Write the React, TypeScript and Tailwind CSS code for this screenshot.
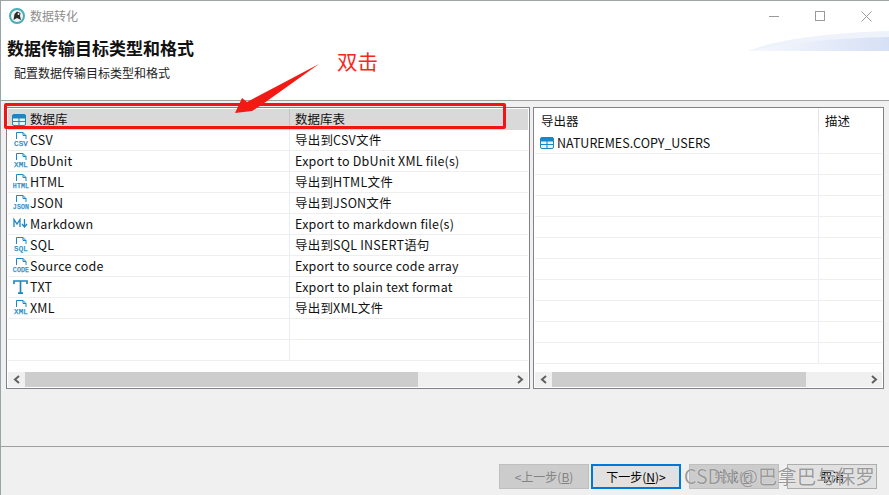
const fontStack = { fontFamily: '"Noto Sans CJK SC", "Noto Sans", sans-serif' };

type Row = { icon: string; name: string; desc: string };

const rows: Row[] = [
  { icon: 'CSV', name: 'CSV', desc: '导出到CSV文件' },
  { icon: 'XML', name: 'DbUnit', desc: 'Export to DbUnit XML file(s)' },
  { icon: 'HTML', name: 'HTML', desc: '导出到HTML文件' },
  { icon: 'JSON', name: 'JSON', desc: '导出到JSON文件' },
  { icon: 'md', name: 'Markdown', desc: 'Export to markdown file(s)' },
  { icon: 'SQL', name: 'SQL', desc: '导出到SQL INSERT语句' },
  { icon: 'CODE', name: 'Source code', desc: 'Export to source code array' },
  { icon: 'T', name: 'TXT', desc: 'Export to plain text format' },
  { icon: 'XML', name: 'XML', desc: '导出到XML文件' },
];

function TableIcon() {
  return (
    <svg width="14" height="12" viewBox="0 0 14 12" className="shrink-0">
      <rect x="0.5" y="0.5" width="13" height="11" rx="1.5" fill="#e8f3fa" stroke="#1b87c5" />
      <rect x="0.5" y="0.5" width="13" height="4" rx="1" fill="#1b87c5" />
      <path d="M0.5 7.5H13.5M7 4V11.5" stroke="#1b87c5" />
    </svg>
  );
}

function FileIcon({ label }: { label: string }) {
  return (
    <svg width="18" height="17" viewBox="0 0 18 17" className="shrink-0 -mt-[2px]">
      <path d="M4.5 8V1.5H11L14 4.5V8M11 1.5V4.5H14" fill="none" stroke="#1b87c5" />
      <text
        x="9"
        y="14.5"
        textAnchor="middle"
        fontSize={label.length > 3 ? 6.5 : 7.5}
        fontWeight="400"
        fill="#1b87c5"
        stroke="#1b87c5"
        strokeWidth="0.25"
        fontFamily='"Liberation Mono", monospace'
      >
        {label}
      </text>
    </svg>
  );
}

function RowIcon({ icon }: { icon: string }) {
  if (icon === 'md') {
    return (
      <svg width="15" height="10" viewBox="0 0 15 10" className="shrink-0 -mt-[2px]">
        <path d="M1 9V1.5L4 6L7 1.5V9" fill="none" stroke="#1b87c5" strokeWidth="1.3" />
        <path d="M11.5 1V8.5M9 6L11.5 9L14 6" fill="none" stroke="#1b87c5" strokeWidth="1.3" />
      </svg>
    );
  }
  if (icon === 'T') {
    return (
      <svg width="15" height="14" viewBox="0 0 15 14" className="shrink-0">
        <path d="M1 4V1H14V4M7.5 1V13M5 13.2H10" fill="none" stroke="#1b87c5" strokeWidth="1.7" />
      </svg>
    );
  }
  return <FileIcon label={icon} />;
}

function Chevron({ dir }: { dir: 'left' | 'right' }) {
  return (
    <div className="w-[17px] h-full flex items-center justify-center shrink-0">
      <svg width="8" height="9" viewBox="0 0 8 9">
        <path
          d={dir === 'left' ? 'M6 1L2 4.5L6 8' : 'M2 1L6 4.5L2 8'}
          fill="none"
          stroke="#606060"
          strokeWidth="2"
        />
      </svg>
    </div>
  );
}

function ScrollBar({ thumb }: { thumb: string }) {
  return (
    <div className="h-[15px] flex items-center bg-[#f0f0f0] shrink-0">
      <Chevron dir="left" />
      <div className="flex-1 h-full">
        <div className={`h-full bg-[#cdcdcd] ${thumb}`} />
      </div>
      <Chevron dir="right" />
    </div>
  );
}

function WizardButton({
  before,
  mnemonic,
  after,
  variant,
}: {
  before: string;
  mnemonic?: string;
  after?: string;
  variant: 'disabled' | 'default' | 'normal';
}) {
  const styles = {
    disabled: 'border border-[#bfbfbf] bg-[#cccccc] text-[#838383]',
    default: 'border-2 border-[#0078d7] bg-[#e1e1e1] text-black',
    normal: 'border border-[#adadad] bg-[#e1e1e1] text-black',
  }[variant];
  return (
    <div className={`w-[90px] h-[25px] flex items-center justify-center text-[12px] ${styles}`}>
      <span>{before}</span>
      {mnemonic && <span className="underline">{mnemonic}</span>}
      {after && <span>{after}</span>}
    </div>
  );
}

export default function App() {
  return (
    <div className="relative w-[889px] h-[495px] overflow-hidden bg-[#f0f0f0] flex text-[#111]" style={fontStack}>
      <div className="w-px bg-[#9aa3a8] shrink-0" />
      <div className="flex-1 flex flex-col min-w-0">
        <div className="h-px bg-[#a0a6a8] shrink-0" />

        {/* Title bar and wizard banner */}
        <div className="relative h-[100px] bg-white border-b border-[#a0a0a0] shrink-0">
          <div className="h-[29px] flex items-center pl-[8px] gap-[5px]">
            <svg width="16" height="16" viewBox="0 0 16 16">
              <circle cx="8" cy="8" r="7" fill="#f4f4f4" stroke="#45aeb8" strokeWidth="2" />
              <path d="M4.5 12L5.5 6L8 3.5L11.5 5L11 8L12 12L8 10Z" fill="#2b2b2b" />
              <circle cx="9.5" cy="6" r="1" fill="#f4f4f4" />
            </svg>
            <span className="text-[12px] text-[#8e8e8e]">数据转化</span>
          </div>
          <div className="absolute top-[3px] right-0 h-[24px] flex items-center text-[#9a9a9a]">
            <div className="w-[46px] flex justify-center">
              <div className="w-[10px] h-px bg-[#9a9a9a]" />
            </div>
            <div className="w-[46px] flex justify-center">
              <div className="w-[10px] h-[10px] border border-[#9a9a9a]" />
            </div>
            <div className="w-[46px] flex justify-center">
              <svg width="11" height="11" viewBox="0 0 11 11">
                <path d="M0.5 0.5L10.5 10.5M10.5 0.5L0.5 10.5" stroke="#9a9a9a" />
              </svg>
            </div>
          </div>
          <svg width="141" height="21" viewBox="0 0 141 21" className="absolute right-0 top-[30px]">
            <defs>
              <linearGradient id="band" x1="0" x2="1" y1="0" y2="0">
                <stop offset="0" stopColor="#f7f9fd" />
                <stop offset="1" stopColor="#d6e0f5" />
              </linearGradient>
            </defs>
            <path d="M0 20C30 8 80 2 141 0V20Z" fill="#edf2fb" />
            <path d="M0 20C40 12 90 7 141 6V20Z" fill="url(#band)" />
          </svg>
          <h1 className="ml-[6px] mt-[7px] text-[17px] leading-[22px] font-bold text-[#111]">数据传输目标类型和格式</h1>
          <p className="ml-[13px] mt-[5px] text-[12px] leading-[18px] text-[#222]">配置数据传输目标类型和格式</p>
        </div>

        {/* Two table panels */}
        <div className="flex-1 min-h-0 flex flex-col px-[5px] pt-[6px] border-b border-[#a0a0a0]">
          <div className="flex h-[282px] gap-[3px]">
            <div className="w-[524px] border border-[#82828a] p-px bg-white flex flex-col">
              <div className="flex-1 relative min-h-0 overflow-hidden tracking-[0.2px]">
                <div className="h-[21px] flex items-center bg-[#d9d9d9] text-[12.5px] tracking-normal">
                  <div className="w-[282px] h-full flex items-center gap-[4px] pl-[4px] border-r border-[#c4c4c4]">
                    <TableIcon />
                    <span>数据库</span>
                  </div>
                  <div className="pl-[5px]">数据库表</div>
                </div>
                {rows.map((row) => (
                  <div key={row.name} className="h-[21px] flex items-center border-b border-[#eeeeee] text-[12.5px]">
                    <div className="w-[282px] h-full flex items-center pl-[3px] border-r border-[#e8eef7]">
                      <div className="w-[19px] flex justify-center shrink-0">
                        <RowIcon icon={row.icon} />
                      </div>
                      <span className="whitespace-nowrap">{row.name}</span>
                    </div>
                    <div className="pl-[5px] whitespace-nowrap">{row.desc}</div>
                  </div>
                ))}
                {[0, 1].map((i) => (
                  <div key={i} className="h-[21px] flex border-b border-[#eeeeee]">
                    <div className="w-[282px] border-r border-[#e8eef7]" />
                  </div>
                ))}
              </div>
              <ScrollBar thumb="w-[393px]" />
            </div>

            <div className="w-[351px] border border-[#82828a] p-px bg-white flex flex-col">
              <div className="flex-1 min-h-0 overflow-hidden">
                <div className="h-[24px] flex items-center text-[12.5px]">
                  <div className="w-[284px] h-full flex items-center pl-[6px] border-r border-[#e4e4e4]">导出器</div>
                  <div className="pl-[6px]">描述</div>
                </div>
                <div className="h-[21px] flex items-center border-b border-[#eeeeee] text-[12.5px]">
                  <div className="w-[284px] h-full flex items-center gap-[3px] pl-[5px] border-r border-[#e8eef7]">
                    <TableIcon />
                    <span>NATUREMES.COPY_USERS</span>
                  </div>
                </div>
                {Array.from({ length: 10 }).map((_, i) => (
                  <div key={i} className="h-[21px] flex border-b border-[#eeeeee]">
                    <div className="w-[284px] border-r border-[#e8eef7]" />
                  </div>
                ))}
              </div>
              <ScrollBar thumb="w-[254px]" />
            </div>
          </div>
        </div>

        {/* Wizard buttons */}
        <div className="h-[48px] shrink-0 flex items-start pt-[17px] pl-[498px] gap-[2px]">
          <WizardButton before="<上一步(" mnemonic="B" after=")" variant="disabled" />
          <WizardButton before="下一步(" mnemonic="N" after=")>" variant="default" />
          <div className="w-[4px]" />
          <WizardButton before="完成(" mnemonic="F" after=")" variant="disabled" />
          <div className="w-[4px]" />
          <WizardButton before="取消" variant="normal" />
        </div>
      </div>

      {/* Screenshot annotations */}
      <div className="absolute left-[4px] top-[103px] w-[502px] h-[26px] border-[3px] border-[#f01414] rounded-[2px]" />
      <svg width="90" height="56" viewBox="0 0 90 56" className="absolute left-[232px] top-[60px]">
        <path d="M87 4L15 42L10 38L3 53L20 51L28 46Z" fill="#f41a14" />
      </svg>
      <span className="absolute left-[337px] top-[46px] text-[20.5px] leading-[30px] text-[#f5281e]">双击</span>
      <span className="absolute left-[684px] top-[460px] text-[19.5px] leading-[32px] text-[#7f7f7f]/80 [text-shadow:0_0_1px_#ffffff] whitespace-nowrap">
        CSDN @巴拿巴与保罗
      </span>
    </div>
  );
}
